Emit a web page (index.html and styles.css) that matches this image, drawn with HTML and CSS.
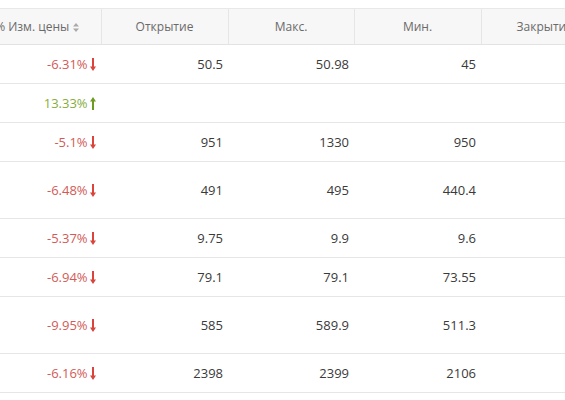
FILE: index.html
```html
<!DOCTYPE html>
<html lang="ru">
<head>
    <meta charset="UTF-8">
    <meta name="viewport" content="width=device-width, initial-scale=1.0">
    <title>Котировки</title>
    <link rel="stylesheet" href="styles.css">
</head>
<body>
    <div class="table-wrap">
        <table class="quotes">
            <colgroup>
                <col class="w-127">
                <col class="w-127">
                <col class="w-126">
                <col class="w-127">
                <col class="w-127">
            </colgroup>
            <thead>
                <tr>
                    <th class="col-change">% Изм. цены <svg class="sort" width="6" height="9" viewBox="0 0 6 9"><path d="M3 0L6 3.6H0Z M0 5.4H6L3 9Z" fill="#aaa"/></svg></th>
                    <th>Открытие</th>
                    <th>Макс.</th>
                    <th>Мин.</th>
                    <th>Закрытие</th>
                </tr>
            </thead>
            <tbody>
                <tr>
                    <td class="down">-6.31% <svg class="arrow" width="6" height="13" viewBox="0 0 6 13"><path d="M2 0H4V8.5H6L3 13L0 8.5H2Z" fill="#d9443c"/></svg></td>
                    <td>50.5</td><td>50.98</td><td>45</td><td></td>
                </tr>
                <tr>
                    <td class="up">13.33% <svg class="arrow" width="6" height="13" viewBox="0 0 6 13"><path d="M2 13H4V4.5H6L3 0L0 4.5H2Z" fill="#6f9a22"/></svg></td>
                    <td></td><td></td><td></td><td></td>
                </tr>
                <tr>
                    <td class="down">-5.1% <svg class="arrow" width="6" height="13" viewBox="0 0 6 13"><path d="M2 0H4V8.5H6L3 13L0 8.5H2Z" fill="#d9443c"/></svg></td>
                    <td>951</td><td>1330</td><td>950</td><td></td>
                </tr>
                <tr class="tall">
                    <td class="down">-6.48% <svg class="arrow" width="6" height="13" viewBox="0 0 6 13"><path d="M2 0H4V8.5H6L3 13L0 8.5H2Z" fill="#d9443c"/></svg></td>
                    <td>491</td><td>495</td><td>440.4</td><td></td>
                </tr>
                <tr>
                    <td class="down">-5.37% <svg class="arrow" width="6" height="13" viewBox="0 0 6 13"><path d="M2 0H4V8.5H6L3 13L0 8.5H2Z" fill="#d9443c"/></svg></td>
                    <td>9.75</td><td>9.9</td><td>9.6</td><td></td>
                </tr>
                <tr>
                    <td class="down">-6.94% <svg class="arrow" width="6" height="13" viewBox="0 0 6 13"><path d="M2 0H4V8.5H6L3 13L0 8.5H2Z" fill="#d9443c"/></svg></td>
                    <td>79.1</td><td>79.1</td><td>73.55</td><td></td>
                </tr>
                <tr class="tall">
                    <td class="down">-9.95% <svg class="arrow" width="6" height="13" viewBox="0 0 6 13"><path d="M2 0H4V8.5H6L3 13L0 8.5H2Z" fill="#d9443c"/></svg></td>
                    <td>585</td><td>589.9</td><td>511.3</td><td></td>
                </tr>
                <tr>
                    <td class="down">-6.16% <svg class="arrow" width="6" height="13" viewBox="0 0 6 13"><path d="M2 0H4V8.5H6L3 13L0 8.5H2Z" fill="#d9443c"/></svg></td>
                    <td>2398</td><td>2399</td><td>2106</td><td></td>
                </tr>
            </tbody>
        </table>
    </div>
</body>
</html>
```

FILE: styles.css
```css
body {
    margin: 8px 0 0 0;
    background-color: #fff;
    font-family: "Open Sans", "Liberation Sans", sans-serif;
    overflow: hidden;
}
.table-wrap {
    margin-left: -26px;
    width: 640px;
}
.quotes {
    border-collapse: collapse;
    table-layout: fixed;
    width: 634px;
}
.w-127 {
    width: 127px;
}
.w-126 {
    width: 126px;
}
.quotes th {
    height: 35px;
    padding: 0;
    background-color: #f7f7f7;
    border-top: 1px solid #e8e8e8;
    border-bottom: 1px solid #e3e3e3;
    border-left: 1px solid #e6e6e6;
    font-size: 12px;
    font-weight: normal;
    color: #6a6a6a;
    text-align: center;
    white-space: nowrap;
}
.quotes th.col-change {
    border-left: none;
}
.quotes td {
    height: 38px;
    padding: 0 5px 0 0;
    border-bottom: 1px solid #e6e6e6;
    font-size: 13px;
    color: #3a3a3a;
    text-align: right;
    white-space: nowrap;
}
.quotes tr.tall td {
    height: 56px;
}
.quotes td.down {
    color: #d25b57;
}
.quotes td.up {
    color: #86ad3a;
}
.sort {
    vertical-align: -1px;
    margin-left: 1px;
}
.arrow {
    vertical-align: -2px;
    margin-left: -1px;
}
```
